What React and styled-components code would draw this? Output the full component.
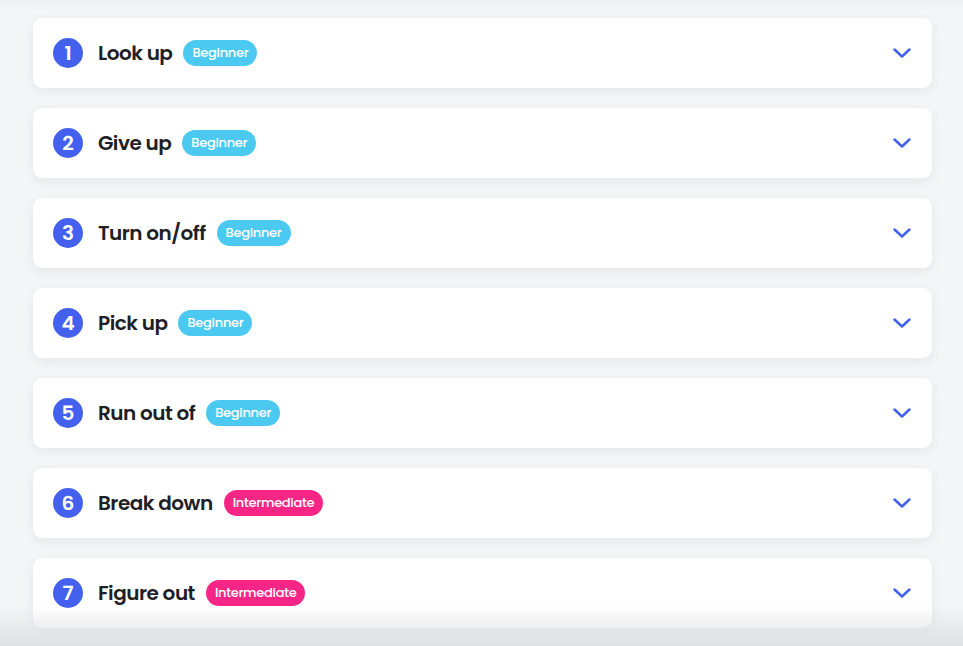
import React from "react";
import styled, { createGlobalStyle } from "styled-components";

const GlobalStyle = createGlobalStyle`
  body {
    margin: 0;
    background: #f4f5f7;
    font-family: "Poppins", "Open Sans", "Liberation Sans", sans-serif;
  }
`;

const Page = styled.div`
  min-height: 646px;
  padding: 18px 0 20px;
  box-sizing: border-box;
  background: linear-gradient(#eeeff2 0, #f4f5f7 12px);
`;

const List = styled.ul`
  list-style: none;
  margin: 0 auto;
  padding: 0;
  max-width: 899px;
  display: flex;
  flex-direction: column;
  gap: 20px;
  position: relative;
  left: 1px;
`;

const Card = styled.li`
  height: 70px;
  display: flex;
  align-items: center;
  padding: 0 21px 0 20px;
  background: #fff;
  border-radius: 9px;
  box-shadow: 0 3px 12px rgba(20, 25, 40, 0.07);
  box-sizing: border-box;
`;

const Number = styled.span`
  width: 30px;
  height: 30px;
  border-radius: 50%;
  background: #4361ee;
  color: #fff;
  font-size: 20px;
  font-weight: 600;
  line-height: 1;
  display: flex;
  align-items: center;
  justify-content: center;
  flex-shrink: 0;
`;

const Title = styled.span`
  margin-left: 15px;
  font-size: 20px;
  font-weight: 600;
  letter-spacing: -0.5px;
  color: #1e2026;
`;

const Badge = styled.span`
  margin-left: 11px;
  height: 26px;
  padding: 0 9px;
  border-radius: 13px;
  background: ${(p) => (p.$level === "Intermediate" ? "#f72585" : "#4cc9f0")};
  color: #fff;
  font-size: 13px;
  font-weight: 500;
  letter-spacing: -0.3px;
  display: flex;
  align-items: center;
`;

const Toggle = styled.button`
  margin-left: auto;
  border: 0;
  background: none;
  padding: 0;
  display: flex;
  color: #4361ee;
  cursor: pointer;
`;

const Fade = styled.div`
  position: fixed;
  left: 0;
  right: 0;
  bottom: 0;
  height: 40px;
  background: linear-gradient(rgba(220, 221, 224, 0), rgba(220, 221, 224, 0.9));
  pointer-events: none;
`;

const Chevron = () => (
  <svg width="18" height="12" viewBox="0 0 18 12" fill="none">
    <path
      d="M1.5 2.5l7.5 7 7.5-7"
      stroke="currentColor"
      strokeWidth="2.5"
      strokeLinecap="round"
      strokeLinejoin="round"
    />
  </svg>
);

const items = [
  { title: "Look up", level: "Beginner" },
  { title: "Give up", level: "Beginner" },
  { title: "Turn on/off", level: "Beginner" },
  { title: "Pick up", level: "Beginner" },
  { title: "Run out of", level: "Beginner" },
  { title: "Break down", level: "Intermediate" },
  { title: "Figure out", level: "Intermediate" },
];

const App = () => (
  <>
    <GlobalStyle />
    <Page>
      <List>
        {items.map((item, i) => (
          <Card key={item.title}>
            <Number>{i + 1}</Number>
            <Title>{item.title}</Title>
            <Badge $level={item.level}>{item.level}</Badge>
            <Toggle aria-label="expand">
              <Chevron />
            </Toggle>
          </Card>
        ))}
      </List>
    </Page>
    <Fade />
  </>
);

export default App;
